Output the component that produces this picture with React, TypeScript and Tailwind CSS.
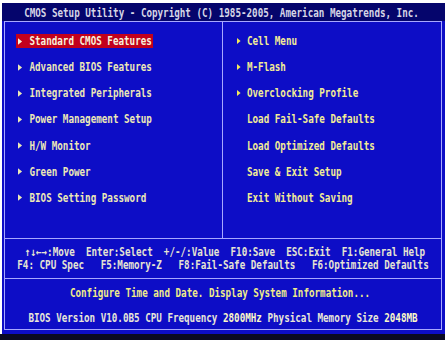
import type { ReactNode } from "react";

function Txt({ children, className = "" }: { children: ReactNode; className?: string }) {
  return <div className={`whitespace-pre scale-y-[1.24] ${className}`}>{children}</div>;
}

function Arrow({ className = "" }: { className?: string }) {
  return (
    <svg width="5" height="7" viewBox="0 0 5 7" className={className}>
      <path d="M0 0 L4.5 3.5 L0 7Z" fill="currentColor" />
    </svg>
  );
}

const leftItems = [
  "Standard CMOS Features",
  "Advanced BIOS Features",
  "Integrated Peripherals",
  "Power Management Setup",
  "H/W Monitor",
  "Green Power",
  "BIOS Setting Password",
];

const rightItems = [
  { label: "Cell Menu", sub: true },
  { label: "M-Flash", sub: true },
  { label: "Overclocking Profile", sub: true },
  { label: "Load Fail-Safe Defaults", sub: false },
  { label: "Load Optimized Defaults", sub: false },
  { label: "Save & Exit Setup", sub: false },
  { label: "Exit Without Saving", sub: false },
];

export default function App() {
  return (
    <div className="w-[445px] h-[340px] overflow-hidden bg-white pt-[3px] pl-[2px] font-['DejaVu_Sans_Mono','Liberation_Mono',monospace] text-[9.24px] font-bold">
      {/* title bar */}
      <div className="flex h-[18px] justify-center bg-[#05056c] pt-[3px] pr-[4px] leading-[13px] text-[#d6d6e6]">
        <Txt>CMOS Setup Utility - Copyright (C) 1985-2005, American Megatrends, Inc.</Txt>
      </div>

      {/* main panel */}
      <div className="h-[313px] bg-[#0d0dc6] pl-[2px] pr-[3px] pb-[4px]">
        <div className="flex h-full flex-col border border-[#a8a8ff]">
          <div className="flex h-[216px]">
            <div className="flex w-[217px] flex-col gap-[12.17px] pt-[12px] pl-[10.5px]">
              {leftItems.map((item, i) => (
                <div key={item} className="flex">
                  <div
                    className={`flex h-[14px] items-center pl-[2.5px] pr-[1px] leading-[14px] ${
                      i === 0 ? "bg-[#c2001c] text-[#f6f2dc]" : "text-[#ece8b6]"
                    }`}
                  >
                    <Arrow className="mr-[7px] w-[4.5px] shrink-0" />
                    <Txt>{item}</Txt>
                  </div>
                </div>
              ))}
            </div>
            <div className="w-px bg-[#a8a8ff]" />
            <div className="flex flex-1 flex-col gap-[12.17px] pt-[12px] pl-[14px] text-[#f2ec96]">
              {rightItems.map((item) => (
                <div key={item.label} className="flex h-[14px] items-center leading-[14px]">
                  <div className="w-[10px] shrink-0">
                    {item.sub && (
                      <svg width="4" height="6" viewBox="0 0 4 6" className="text-[#f4ea5a]">
                        <path d="M0 0 L3.6 3 L0 6Z" fill="currentColor" />
                      </svg>
                    )}
                  </div>
                  <Txt>{item.label}</Txt>
                </div>
              ))}
            </div>
          </div>

          <div className="h-px bg-[#a8a8ff]" />

          {/* key help */}
          <div className="flex h-[39px] flex-col items-center justify-center leading-[12.5px] text-[#e6e4d2]">
            <Txt className="pl-[4px]">↑↓←→:Move  Enter:Select  +/-/:Value  F10:Save  ESC:Exit  F1:General Help</Txt>
            <Txt>F4: CPU Spec   F5:Memory-Z   F8:Fail-Safe Defaults   F6:Optimized Defaults</Txt>
          </div>

          <div className="h-px bg-[#a8a8ff]" />

          {/* status */}
          <div className="flex flex-1 flex-col items-center gap-[12px] pt-[7px] leading-[13px]">
            <Txt className="pr-[6px] text-[#f0ec8a]">Configure Time and Date. Display System Information...</Txt>
            <Txt className="text-[#e8e6d8]">
              BIOS Version V10.0B5 CPU Frequency <span className="text-[#fbf8c8]">2800MHz</span> Physical Memory Size{" "}
              <span className="text-[#fbf8c8]">2048MB</span>
            </Txt>
          </div>
        </div>
      </div>

      <div className="-ml-[2px] h-[6px] bg-[#0a0a22]" />
    </div>
  );
}
